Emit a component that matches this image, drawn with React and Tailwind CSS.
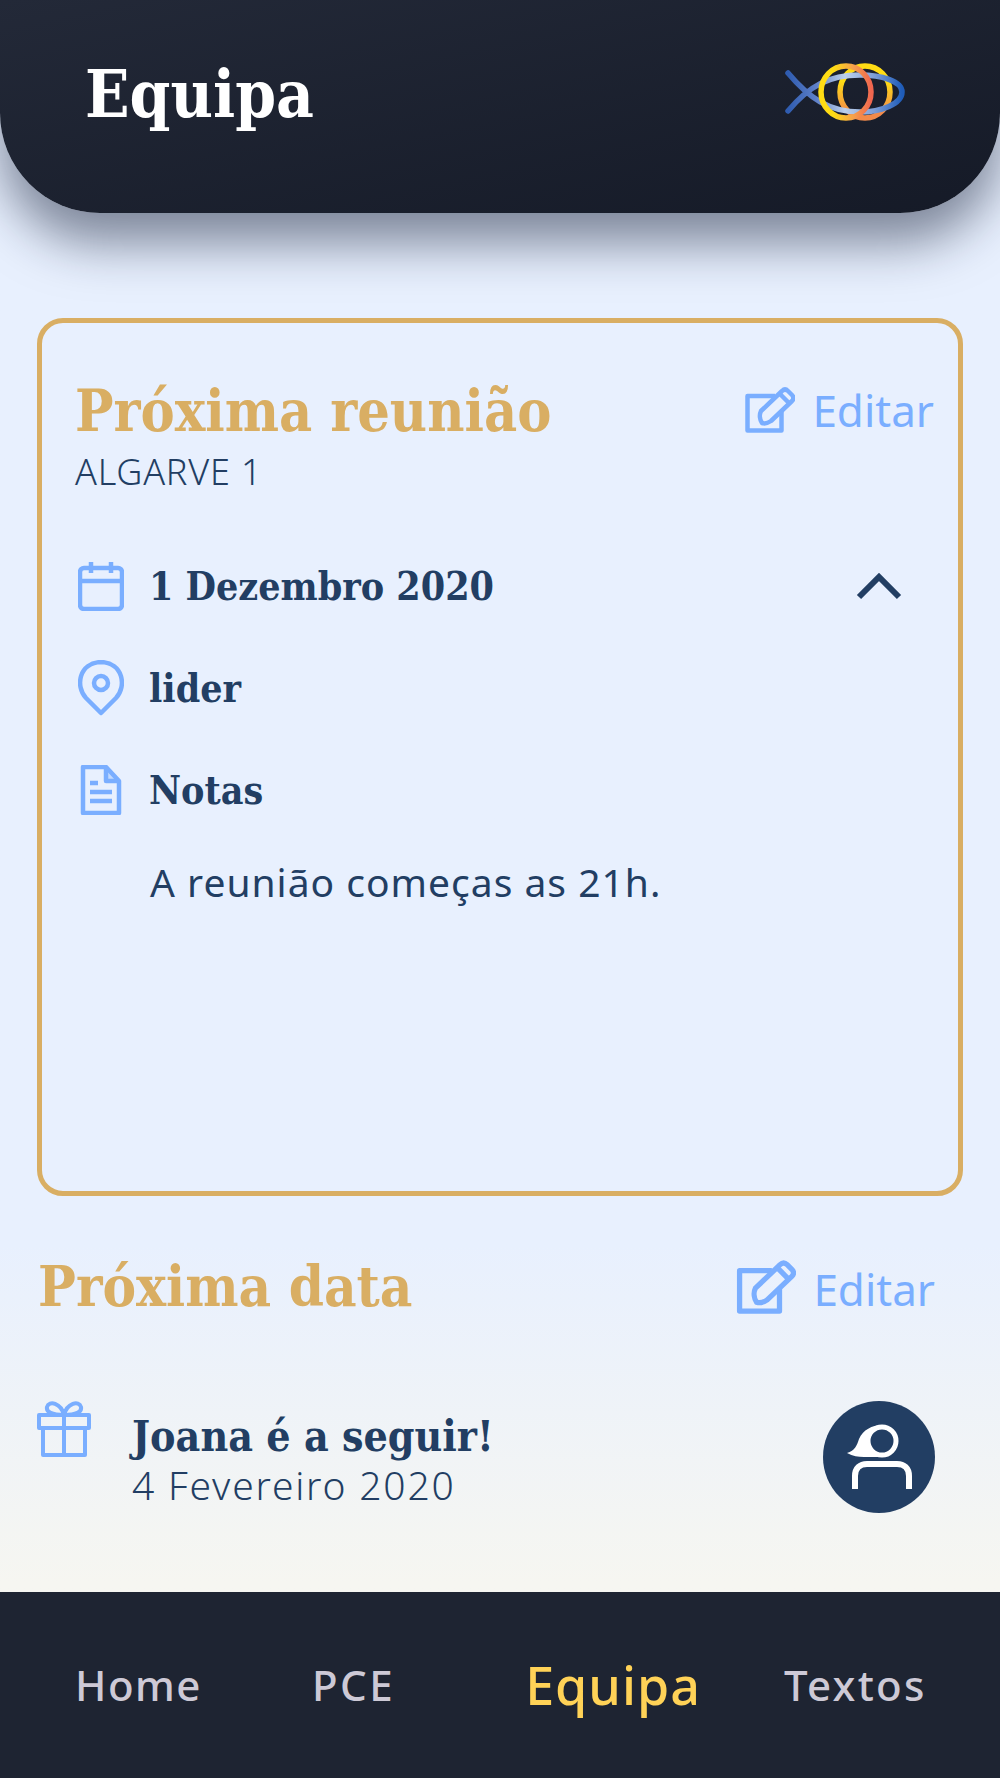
import React from 'react';

const serif = "font-['DejaVu_Serif',serif] font-bold font-stretch-condensed";
const sans = "font-['Noto_Sans',sans-serif]";

const Logo = () => (
  <svg width="120" height="60" viewBox="0 0 120 60" fill="none" strokeWidth="5.5" strokeLinecap="round">
    <defs>
      <linearGradient id="fish" x1="0" x2="1" y1="0" y2="0">
        <stop offset="0" stopColor="#2f5cb0" />
        <stop offset="0.25" stopColor="#5f80c8" />
        <stop offset="0.5" stopColor="#bcd0ec" />
        <stop offset="0.75" stopColor="#7f9fd8" />
        <stop offset="1" stopColor="#1f5cb8" />
      </linearGradient>
      <linearGradient id="ringa" x1="0" x2="1" y1="0" y2="0">
        <stop offset="0.25" stopColor="#ffdc14" />
        <stop offset="0.65" stopColor="#f6a04c" />
        <stop offset="1" stopColor="#f0664f" />
      </linearGradient>
      <linearGradient id="ringb" x1="0" x2="0" y1="0" y2="1">
        <stop offset="0.3" stopColor="#ffdc14" />
        <stop offset="0.9" stopColor="#f28a4a" />
      </linearGradient>
    </defs>
    <ellipse cx="80" cy="30" rx="25" ry="26" stroke="url(#ringb)" />
    <path d="M3 11 C24 36 44 50 75 50 C96 50 117 42 117 30 C117 19 96 13 75 13 C44 13 24 24 3 49" stroke="url(#fish)" />
    <ellipse cx="61" cy="30" rx="25" ry="26" stroke="url(#ringa)" />
  </svg>
);

const EditIcon = ({ className }) => (
  <svg className={className} viewBox="0 0 50 46" fill="none" stroke="#7aaeff" strokeWidth="4.5" strokeLinejoin="round">
    <path d="M30 9H2.5v34.5h34V24" />
    <path d="M16 24L37 4c2-2 4-2 6 0l4 4c2 2 2 4 0 6L26 34c-3 2-6 3-9 2-2-3-3-8-1-12z" />
    <path d="M35 7l9 9" />
  </svg>
);

const CalendarIcon = () => (
  <svg width="46" height="50" viewBox="0 0 46 50" fill="none" stroke="#7aaeff" strokeWidth="4.5" strokeLinejoin="round">
    <rect x="2" y="7" width="42" height="41" rx="4" />
    <path d="M2 20h42M13 1v11M33 1v11" />
  </svg>
);

const PinIcon = () => (
  <svg width="46" height="56" viewBox="0 0 46 56" fill="none" stroke="#7aaeff" strokeWidth="4.5" strokeLinejoin="round">
    <path d="M23 53L8 38C-3 26 1 3 23 2c22 1 26 24 15 36z" />
    <circle cx="23" cy="23" r="7" />
  </svg>
);

const NoteIcon = () => (
  <svg width="42" height="50" viewBox="0 0 42 50" fill="none" stroke="#7aaeff" strokeWidth="4.5" strokeLinejoin="round">
    <path d="M3 2h23l13 14v32H3z" />
    <path d="M26 2v14h13" fill="#7aaeff" fillOpacity="0.35" />
    <path d="M10 18h8M10 27h22M10 36h22" />
  </svg>
);

const GiftIcon = () => (
  <svg width="54" height="56" viewBox="0 0 54 56" fill="none" stroke="#7aaeff" strokeWidth="4" strokeLinejoin="round">
    <path d="M2 14h50v13H2zM6 27v27h42V27M27 14v40" />
    <path d="M27 14C24 2 12-1 10 6c-1 5 5 8 17 8zM27 14C30 2 42-1 44 6c1 5-5 8-17 8z" />
  </svg>
);

const Chevron = () => (
  <svg className="ml-auto mr-[32px]" width="46" height="30" viewBox="0 0 46 30" fill="none" stroke="#223e63" strokeWidth="6">
    <path d="M3 26L23 6l20 20" />
  </svg>
);

const Avatar = () => (
  <div className="w-[112px] h-[112px] rounded-full bg-[#223e63] flex items-center justify-center">
    <svg width="66" height="66" viewBox="0 0 66 66" fill="none">
      <path d="M1 29c8-2 10-8 12-14C17 6 26 1 36 1v32H18C12 33 7 32 1 29z" fill="#fff" />
      <circle cx="36" cy="17" r="14" fill="#223e63" stroke="#fff" strokeWidth="5" />
      <path d="M9 65V52c0-8 5-12 12-12h30c7 0 12 4 12 12v13" stroke="#fff" strokeWidth="6" />
    </svg>
  </div>
);

const InfoRow = ({ icon, children, right }) => (
  <div className="flex items-center h-[60px]">
    <div className="w-[50px] ml-[1px] flex justify-center">{icon}</div>
    <div className={`${serif} ml-[23px] text-[39px] leading-none text-[#223e63]`}>{children}</div>
    {right}
  </div>
);

const EditLink = ({ iconClass, textClass }) => (
  <div className="flex items-center gap-[17px]">
    <EditIcon className={iconClass} />
    <span className={`${sans} ${textClass} text-[44px] leading-none text-[#7aaeff]`}>Editar</span>
  </div>
);

export default function App() {
  return (
    <div className="w-[1000px] h-[1778px] flex flex-col bg-gradient-to-b from-[#e8f0fe] from-70% to-[#f6f6f1] to-[89%] overflow-hidden">
      <header className="relative h-[213px] shrink-0 flex justify-between bg-gradient-to-br from-[#232938] to-[#151a27] rounded-b-[100px] shadow-[0_30px_50px_rgba(20,30,55,0.5)]">
        <h1 className={`${serif} ml-[85px] mt-[62px] text-[65px] leading-none text-white`}>Equipa</h1>
        <div className="mr-[95px] mt-[62px]"><Logo /></div>
      </header>

      <main className="flex-1 px-[37px] pt-[105px]">
        <section className="h-[878px] border-[5px] border-[#d9ae63] rounded-[26px] pl-[33px] pr-[24px] pt-[57px]">
          <div className="flex justify-between items-center h-[60px]">
            <h2 className={`${serif} text-[57px] leading-none text-[#d9ae63]`}>Próxima reunião</h2>
            <EditLink iconClass="w-[50px] h-[46px]" />
          </div>
          <div className={`${sans} text-[36px] font-light leading-none tracking-[0.8px] text-[#223e63] mt-[14px]`}>ALGARVE 1</div>
          <div className="mt-[66px] flex flex-col gap-[42px]">
            <InfoRow icon={<CalendarIcon />} right={<Chevron />}>1 Dezembro 2020</InfoRow>
            <InfoRow icon={<PinIcon />}>lider</InfoRow>
            <InfoRow icon={<NoteIcon />}>Notas</InfoRow>
          </div>
          <p className={`${sans} ml-[75px] mt-[42px] text-[39px] leading-none tracking-[1px] text-[#223e63]`}>A reunião começas as 21h.</p>
        </section>

        <div className="flex justify-between items-center h-[60px] mt-[60px] pr-[28px]">
          <h2 className={`${serif} ml-[1px] text-[56px] leading-none text-[#d9ae63]`}>Próxima data</h2>
          <EditLink iconClass="w-[60px] h-[54px] mt-[2px]" textClass="mt-[6px]" />
        </div>

        <div className="flex mt-[85px] pr-[28px]">
          <GiftIcon />
          <div className="ml-[41px] mt-[14px]">
            <div className={`${serif} text-[42.5px] leading-none text-[#223e63]`}>Joana é a seguir!</div>
            <div className={`${sans} text-[39px] font-light leading-none tracking-[1.8px] text-[#223e63] mt-[7px]`}>4 Fevereiro 2020</div>
          </div>
          <div className="ml-auto"><Avatar /></div>
        </div>
      </main>

      <nav className={`${sans} h-[186px] shrink-0 bg-[#1e2432] flex items-center font-medium text-[42px] leading-none tracking-[1.5px] text-[#cdc9d6]`}>
        <span className="ml-[75px]">Home</span>
        <span className="ml-[110px] tracking-[2.5px]">PCE</span>
        <span className="ml-[130px] text-[52px] tracking-[1px] text-[#ffd257]">Equipa</span>
        <span className="ml-[83px] tracking-[2.3px]">Textos</span>
      </nav>
    </div>
  );
}
